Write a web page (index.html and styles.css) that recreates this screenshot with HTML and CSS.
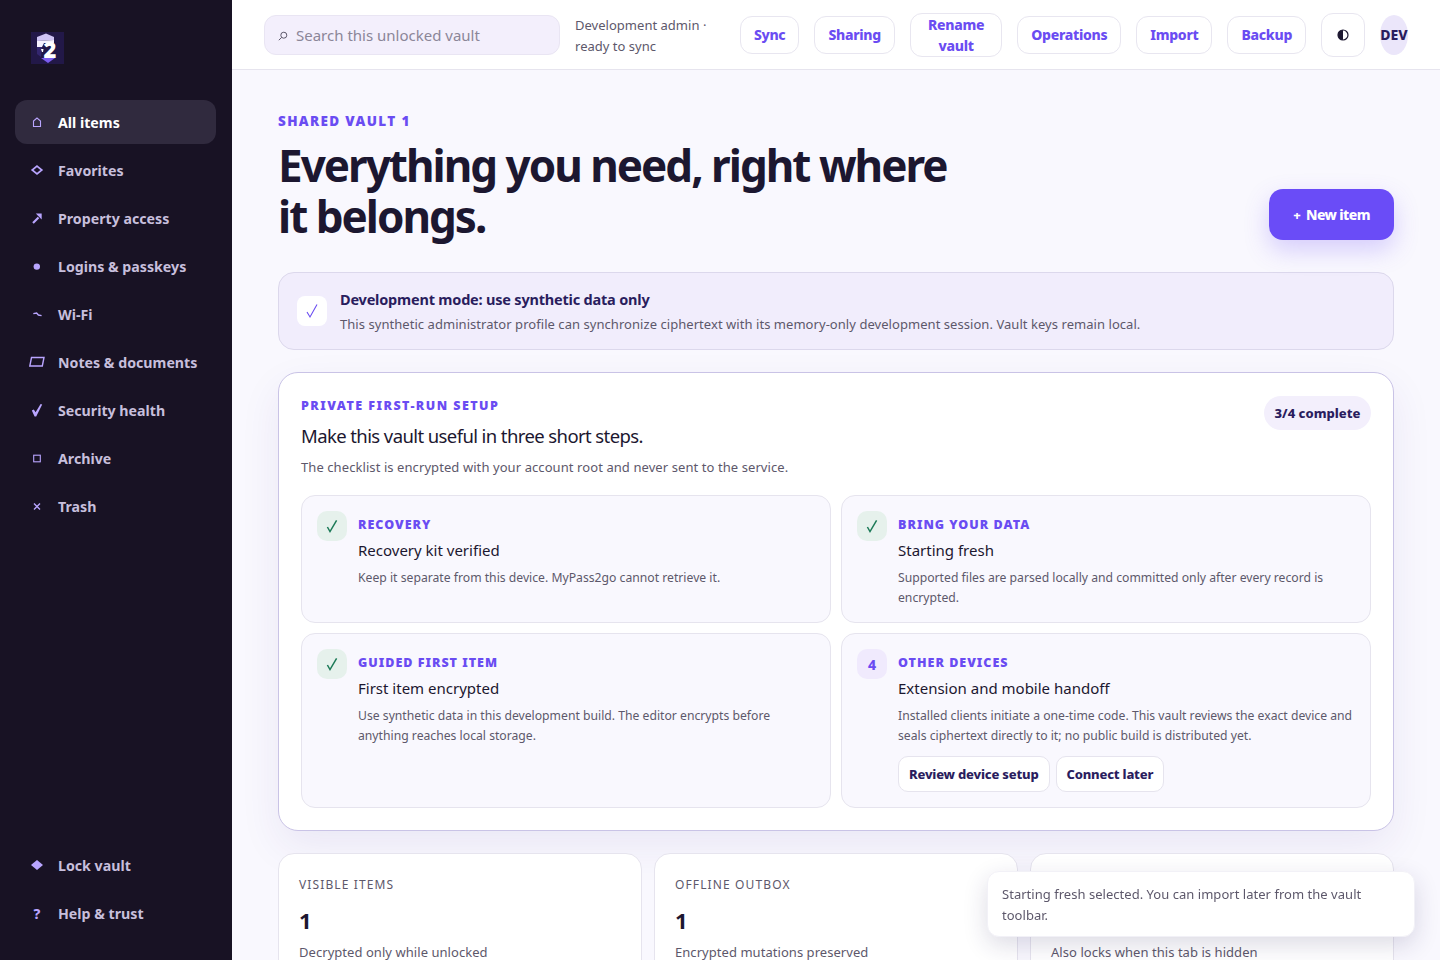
FILE: index.html
```html
<!DOCTYPE html>
<html lang="en">
<head>
<meta charset="utf-8">
<title>MyPass2go</title>
<link rel="stylesheet" href="styles.css">
</head>
<body>
<div class="app">
  <aside class="sidebar">
    <div class="logo">
      <svg width="33" height="32" viewBox="0 0 33 32" aria-hidden="true">
        <rect width="33" height="32" fill="#221848"/>
        <path d="M6 5 L15 1.5 L23 5 V8 L6 9 Z" fill="#cfc4f5"/>
        <path d="M6 9 L23 8 V11 H13 L11 15 H6 Z" fill="#f6f2ff"/>
        <path d="M6 15 H11 L10 25 L6 22 Z" fill="#33266f"/>
        <path d="M10 17 H12.5 L12 20 H11 Z" fill="#fff"/>
        <path d="M10 26 H24 L17 31 Z" fill="#7c5cf0"/>
        <text x="19" y="26" class="logo-two">2</text>
      </svg>
    </div>
    <nav class="nav">
      <a class="nav-item active"><span class="nav-ico"><svg width="16" height="16" viewBox="0 0 16 16"><path class="ln thin" d="M4.5 12.5 V7 L8 4 L11.5 7 V12.5 Z"/></svg></span>All items</a>
      <a class="nav-item"><span class="nav-ico"><svg width="16" height="16" viewBox="0 0 16 16"><path class="ln" d="M8 4.2 L12.8 8 L8 11.8 L3.2 8 Z"/></svg></span>Favorites</a>
      <a class="nav-item"><span class="nav-ico"><svg width="16" height="16" viewBox="0 0 16 16"><path class="ln heavy" d="M4 13 L9.5 7.5"/><path class="fl" d="M6.8 3.6 H12.7 V9.6 Z"/></svg></span>Property access</a>
      <a class="nav-item"><span class="nav-ico"><svg width="16" height="16" viewBox="0 0 16 16"><circle class="fl" cx="7.8" cy="8.6" r="3.2"/></svg></span>Logins &amp; passkeys</a>
      <a class="nav-item"><span class="nav-ico"><svg width="16" height="16" viewBox="0 0 16 16"><path class="ln mid" d="M4.3 7.6 L7.6 7 L9.4 9 L12.6 9.6"/></svg></span>Wi-Fi</a>
      <a class="nav-item"><span class="nav-ico"><svg width="16" height="16" viewBox="0 0 16 16"><path class="ln mid" d="M2.5 3.5 H15 L13.3 12 H.8 Z"/></svg></span>Notes &amp; documents</a>
      <a class="nav-item"><span class="nav-ico"><svg width="16" height="16" viewBox="0 0 16 16"><path class="fl" d="M2.8 8.4 L4.8 7.4 L6.6 10.2 L11.6 2 L13.2 2.6 L7.2 14.4 H5.6 Z"/></svg></span>Security health</a>
      <a class="nav-item"><span class="nav-ico"><svg width="16" height="16" viewBox="0 0 16 16"><rect class="ln thin" x="4.7" y="5.2" width="6.6" height="6.6"/></svg></span>Archive</a>
      <a class="nav-item"><span class="nav-ico"><svg width="16" height="16" viewBox="0 0 16 16"><path class="ln mid" d="M5 5.4 L11 11.4 M11 5.4 L5 11.4"/></svg></span>Trash</a>
    </nav>
    <div class="nav nav-foot">
      <a class="nav-item"><span class="nav-ico"><svg width="16" height="16" viewBox="0 0 16 16"><path class="fl" d="M8 3 L14 8 L8 13 L2 8 Z"/></svg></span>Lock vault</a>
      <a class="nav-item"><span class="nav-ico nav-q">?</span>Help &amp; trust</a>
    </div>
  </aside>
  <div class="content">
    <header class="topbar">
      <div class="search"><svg class="search-ico" width="10" height="10" viewBox="0 0 10 10"><circle cx="5.8" cy="4.2" r="3"/><path d="M3.7 6.4 L.8 9.2"/></svg><span class="search-text">Search this unlocked vault</span></div>
      <div class="status">Development admin · ready to sync</div>
      <div class="actions">
        <button class="tool">Sync</button>
        <button class="tool">Sharing</button>
        <button class="tool tool-wrap">Rename vault</button>
        <button class="tool">Operations</button>
        <button class="tool">Import</button>
        <button class="tool">Backup</button>
        <button class="theme"><svg width="12" height="12" viewBox="0 0 12 12"><circle cx="6" cy="6" r="5" fill="none" stroke="#1c1730" stroke-width="1.2"/><path d="M6 1 A5 5 0 0 0 6 11 Z" fill="#1c1730"/></svg></button>
        <div class="avatar">DEV</div>
      </div>
    </header>
    <main class="main">
      <section class="hero">
        <div>
          <div class="eyebrow">SHARED VAULT 1</div>
          <h1>Everything you need, right where it belongs.</h1>
        </div>
        <button class="primary"><span class="plus">+</span>New item</button>
      </section>
      <section class="banner">
        <span class="banner-ico"><svg width="14" height="16" viewBox="0 0 14 16"><path d="M2 9 L5 14 L12 1.5" fill="none" stroke="#6a4cf2" stroke-width="1.1"/></svg></span>
        <div>
          <div class="banner-title">Development mode: use synthetic data only</div>
          <div class="banner-text">This synthetic administrator profile can synchronize ciphertext with its memory-only development session. Vault keys remain local.</div>
        </div>
      </section>
      <section class="setup">
        <div class="setup-head">
          <div>
            <div class="eyebrow small">PRIVATE FIRST-RUN SETUP</div>
            <h2>Make this vault useful in three short steps.</h2>
            <p class="setup-sub">The checklist is encrypted with your account root and never sent to the service.</p>
          </div>
          <span class="pill">3/4 complete</span>
        </div>
        <div class="steps">
          <article class="step">
            <span class="badge done"><svg width="14" height="16" viewBox="0 0 14 16"><path d="M2.4 9 L5 13.6 L11.6 2.4"/></svg></span>
            <div>
              <div class="step-label">RECOVERY</div>
              <h3>Recovery kit verified</h3>
              <p>Keep it separate from this device. MyPass2go cannot retrieve it.</p>
            </div>
          </article>
          <article class="step">
            <span class="badge done"><svg width="14" height="16" viewBox="0 0 14 16"><path d="M2.4 9 L5 13.6 L11.6 2.4"/></svg></span>
            <div>
              <div class="step-label">BRING YOUR DATA</div>
              <h3>Starting fresh</h3>
              <p>Supported files are parsed locally and committed only after every record is encrypted.</p>
            </div>
          </article>
          <article class="step">
            <span class="badge done"><svg width="14" height="16" viewBox="0 0 14 16"><path d="M2.4 9 L5 13.6 L11.6 2.4"/></svg></span>
            <div>
              <div class="step-label">GUIDED FIRST ITEM</div>
              <h3>First item encrypted</h3>
              <p>Use synthetic data in this development build. The editor encrypts before anything reaches local storage.</p>
            </div>
          </article>
          <article class="step">
            <span class="badge">4</span>
            <div>
              <div class="step-label">OTHER DEVICES</div>
              <h3>Extension and mobile handoff</h3>
              <p>Installed clients initiate a one-time code. This vault reviews the exact device and seals ciphertext directly to it; no public build is distributed yet.</p>
              <div class="step-actions">
                <button class="small-btn">Review device setup</button>
                <button class="small-btn">Connect later</button>
              </div>
            </div>
          </article>
        </div>
      </section>
      <section class="stats">
        <article class="stat">
          <div class="stat-label">VISIBLE ITEMS</div>
          <div class="stat-value">1</div>
          <div class="stat-note">Decrypted only while unlocked</div>
        </article>
        <article class="stat">
          <div class="stat-label">OFFLINE OUTBOX</div>
          <div class="stat-value">1</div>
          <div class="stat-note">Encrypted mutations preserved</div>
        </article>
        <article class="stat">
          <div class="stat-label">&nbsp;</div>
          <div class="stat-value">&nbsp;</div>
          <div class="stat-note">Also locks when this tab is hidden</div>
        </article>
      </section>
    </main>
  </div>
</div>
<div class="toast">Starting fresh selected. You can import later from the vault toolbar.</div>
</body>
</html>
```
FILE: styles.css
```css
* { box-sizing: border-box; }
html, body { margin: 0; height: 100%; overflow: hidden; }
body { font-family: "Noto Sans", "Open Sans", sans-serif; color: #1c1730; background: #f9f8fe; }
button { font-family: inherit; cursor: pointer; }
h1, h2, h3, p { margin: 0; }

.app { display: flex; height: 960px; }

.sidebar { width: 232px; flex: none; background: #181224; display: flex; flex-direction: column; padding: 32px 16px 25px 15px; }
.logo { width: 33px; height: 32px; margin: 0 0 36px 16px; }
.logo svg { display: block; }
.logo-two { font: 900 22px "Noto Sans", sans-serif; fill: #fff; text-anchor: middle; }
.nav { display: flex; flex-direction: column; gap: 4px; }
.nav-foot { margin-top: auto; }
.nav-item { height: 44px; display: flex; align-items: center; padding: 0 14px; border-radius: 12px; color: #c7bfdc; font-size: 14.2px; font-weight: 700; }
.nav-item.active { background: #302a3e; color: #fff; }
.nav-ico { width: 16px; height: 16px; flex: none; margin-right: 13px; display: flex; align-items: center; justify-content: center; color: #b9a5ff; }
.nav-ico svg { display: block; overflow: visible; }
.nav-q { font-size: 14px; font-weight: 800; }
.ln { fill: none; stroke: #b9a5ff; stroke-width: 1.7; }
.ln.heavy { stroke-width: 2.2; }
.ln.mid { stroke-width: 1.4; }
.ln.thin { stroke-width: 1.1; }
.fl { fill: #b9a5ff; }

.content { flex: 1; min-width: 0; display: flex; flex-direction: column; }
.topbar { height: 70px; flex: none; background: #fff; border-bottom: 1px solid #e6e4ee; display: flex; align-items: center; padding: 0 32px; }
.search { width: 296px; height: 40px; flex: none; background: #f3effc; border: 1px solid #e9e5f3; border-radius: 12px; display: flex; align-items: center; padding: 0 12px 0 13px; color: #8b8698; font-size: 15px; }
.search-ico { flex: none; margin: 2px 8px 0 0; fill: none; stroke: #5d586b; stroke-width: 1; }
.status { width: 150px; margin: 2px 0 0 15px; flex: none; font-size: 13px; line-height: 21px; color: #5d586b; letter-spacing: 0.02px; }
.actions { display: flex; align-items: center; gap: 15px; margin-left: auto; }
.tool { height: 38px; padding: 0 13px; background: #fff; border: 1px solid #e8e6f0; border-radius: 12px; color: #6a4cf2; font-size: 14px; font-weight: 800; line-height: 21px; letter-spacing: -0.3px; }
.tool-wrap { width: 92.4px; height: 44px; padding: 0 6px; }
.theme { width: 44px; height: 44px; background: #fff; border: 1px solid #e8e6f0; border-radius: 12px; padding: 0; display: flex; align-items: center; justify-content: center; }
.avatar { width: 28px; height: 40px; border-radius: 50%; background: #ebe6fa; color: #2a1d5e; font-size: 14px; font-weight: 800; display: flex; align-items: center; justify-content: center; white-space: nowrap; }

.main { flex: 1; min-height: 0; overflow: hidden; padding: 42px 46px 0; }
.hero { display: flex; justify-content: space-between; align-items: flex-end; margin-bottom: 32px; }
.eyebrow { color: #6a4cf2; font-size: 13.5px; font-weight: 900; letter-spacing: 1.35px; line-height: 18px; }
h1 { width: 690px; margin-top: 10px; margin-bottom: -2px; font-size: 44px; line-height: 51px; font-weight: 700; letter-spacing: -2px; color: #1c1730; }
.primary { width: 125px; height: 51px; border: 0; border-radius: 14px; background: #6a4cf7; color: #fff; font-size: 14px; font-weight: 800; box-shadow: 0 10px 24px rgba(106,76,247,.25); letter-spacing: -0.6px; }
.plus { margin-right: 6px; font-size: 13px; }

.banner { height: 78px; background: #f1edfc; border: 1px solid #dcd8ec; border-radius: 16px; display: flex; align-items: center; gap: 13px; padding: 0 18px; margin-bottom: 22px; }
.banner-ico { width: 30px; height: 30px; flex: none; background: #fff; border-radius: 8px; display: flex; align-items: center; justify-content: center; }
.banner-title { font-size: 14.5px; font-weight: 700; color: #2a1d5e; line-height: 20px; letter-spacing: -0.2px; }
.banner-text { font-size: 13px; color: #5d586b; line-height: 20px; margin-top: 5px; letter-spacing: 0.05px; }

.setup { background: #fff; border: 1px solid #c9c3e6; border-radius: 20px; padding: 22px; box-shadow: 0 16px 40px rgba(60,40,140,.08); margin-bottom: 22px; }
.setup-head { display: flex; justify-content: space-between; align-items: flex-start; margin-bottom: 18px; }
.eyebrow.small { font-size: 12.5px; letter-spacing: 1.45px; line-height: 20px; margin-top: 1px; }
h2 { font-size: 18.5px; font-weight: 400; line-height: 26px; letter-spacing: -0.6px; margin-top: 7px; color: #1c1730; }
.setup-sub { margin-top: 8px; font-size: 13px; line-height: 20px; color: #5d586b; letter-spacing: 0.08px; }
.pill { height: 34px; margin-top: 1px; padding: 0 10.5px; border-radius: 17px; background: #f3effc; color: #2a1d5e; font-size: 13px; font-weight: 800; letter-spacing: 0.02px; display: flex; align-items: center; }

.steps { display: grid; grid-template-columns: 1fr 1fr; gap: 10px; }
.step { background: #f9f8fe; border: 1px solid #e6e4ee; border-radius: 14px; padding: 15px 15px 14px; display: flex; gap: 11px; }
.badge { width: 30px; height: 30px; flex: none; border-radius: 10px; background: #f0eafd; color: #6a4cf2; font-size: 14px; font-weight: 800; display: flex; align-items: center; justify-content: center; }
.badge.done { background: #e6f1ec; }
.badge.done path { fill: none; stroke: #1c7a57; stroke-width: 1.5; }
.step-label { font-size: 12.5px; font-weight: 900; color: #6a4cf2; letter-spacing: 1px; line-height: 20px; margin-top: 4px; }
h3 { font-size: 15px; font-weight: 400; line-height: 22px; margin-top: 4px; color: #1c1730; }
.step p { font-size: 12.2px; line-height: 20px; color: #5d586b; margin-top: 7px; }
.step-actions { display: flex; gap: 6px; margin: 10px 0 1px; }
.small-btn { height: 36px; padding: 0 10px; background: #fff; border: 1px solid #e6e4ee; border-radius: 10px; color: #2a1d5e; font-size: 13px; font-weight: 800; letter-spacing: -0.2px; }

.stats { display: grid; grid-template-columns: repeat(3, 1fr); gap: 12px; }
.stat { background: #fff; border: 1px solid #e6e4ee; border-radius: 16px; padding: 22px 20px 20px; height: 130px; }
.stat-label { font-size: 12px; letter-spacing: 1.12px; color: #5d586b; line-height: 18px; }
.stat-value { font-size: 22px; font-weight: 700; line-height: 30px; margin-top: 11px; }
.stat-note { font-size: 13px; color: #5d586b; line-height: 20px; margin-top: 7px; letter-spacing: 0.05px; }

.toast { position: fixed; left: 987px; top: 871px; width: 428px; height: 66px; padding: 12px 14px; background: #fff; border: 1px solid #f2f1f7; border-radius: 12px; font-size: 13px; line-height: 21px; letter-spacing: 0.03px; color: #5d586b; box-shadow: 0 8px 24px rgba(40,30,90,.16); }
```
